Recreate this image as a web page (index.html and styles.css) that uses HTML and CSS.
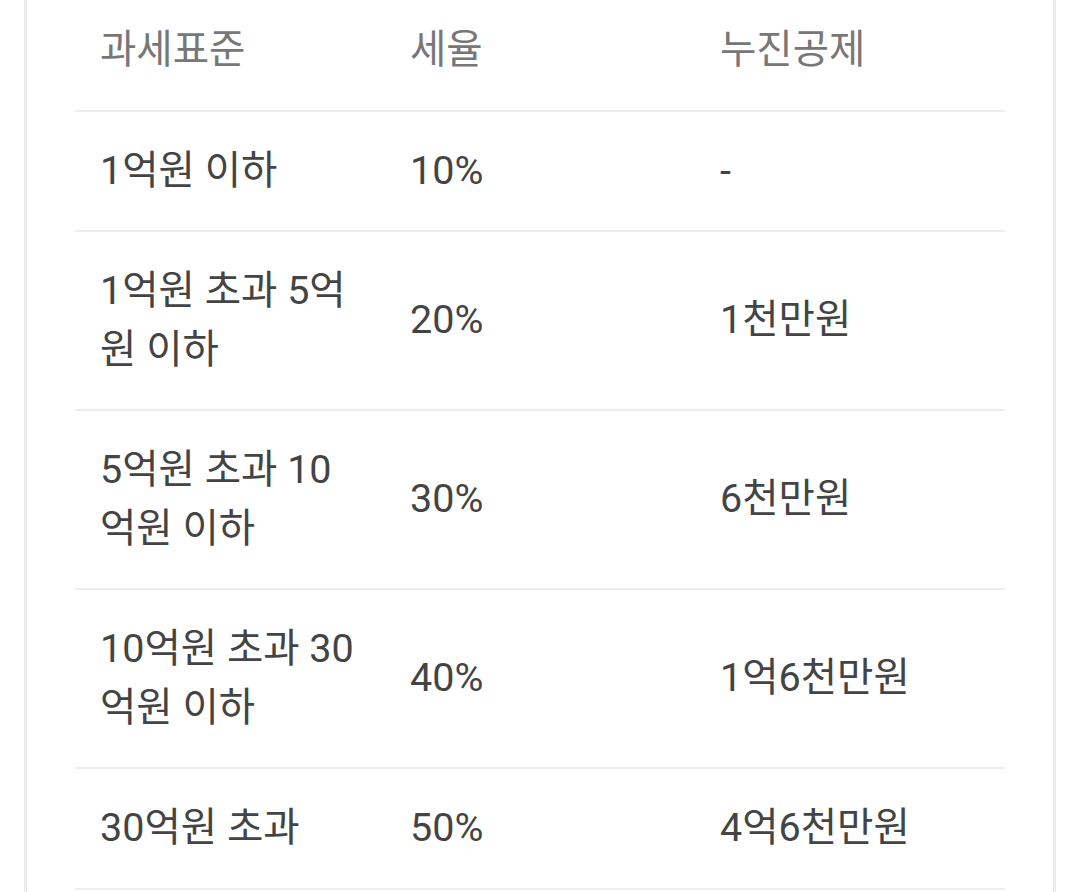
FILE: index.html
```html
<!DOCTYPE html>
<html lang="ko">
<head>
<meta charset="utf-8">
<link rel="stylesheet" href="styles.css">
</head>
<body>
<div class="card">
  <table class="tax-table">
    <thead>
      <tr><th>과세표준</th><th>세율</th><th>누진공제</th></tr>
    </thead>
    <tbody>
      <tr><td>1억원 이하</td><td>10%</td><td>-</td></tr>
      <tr><td>1억원 초과 5억원 이하</td><td>20%</td><td>1천만원</td></tr>
      <tr><td>5억원 초과 10억원 이하</td><td>30%</td><td>6천만원</td></tr>
      <tr><td>10억원 초과 30억원 이하</td><td>40%</td><td>1억6천만원</td></tr>
      <tr><td>30억원 초과</td><td>50%</td><td>4억6천만원</td></tr>
    </tbody>
  </table>
</div>
</body>
</html>
```

FILE: styles.css
```css
html, body {
  margin: 0;
  padding: 0;
  background: #ffffff;
}
body {
  font-family: Roboto, "Noto Sans CJK KR", sans-serif;
  overflow: hidden;
}
.card {
  margin: -9px 24px 0 24px;
  border-left: 3px solid #ebebeb;
  border-right: 3px solid #ebebeb;
  padding: 0 48px 40px 48px;
  background: #fff;
}
.tax-table {
  width: 100%;
  table-layout: fixed;
  border-collapse: collapse;
  font-size: 39.5px;
  line-height: 58.5px;
}
.tax-table th,
.tax-table td {
  text-align: left;
  padding: 30px 25px;
  border-bottom: 2px solid #eeeeee;
  vertical-align: middle;
}
.tax-table th {
  font-weight: 400;
  color: #777777;
}
.tax-table td {
  color: #444444;
}
```
